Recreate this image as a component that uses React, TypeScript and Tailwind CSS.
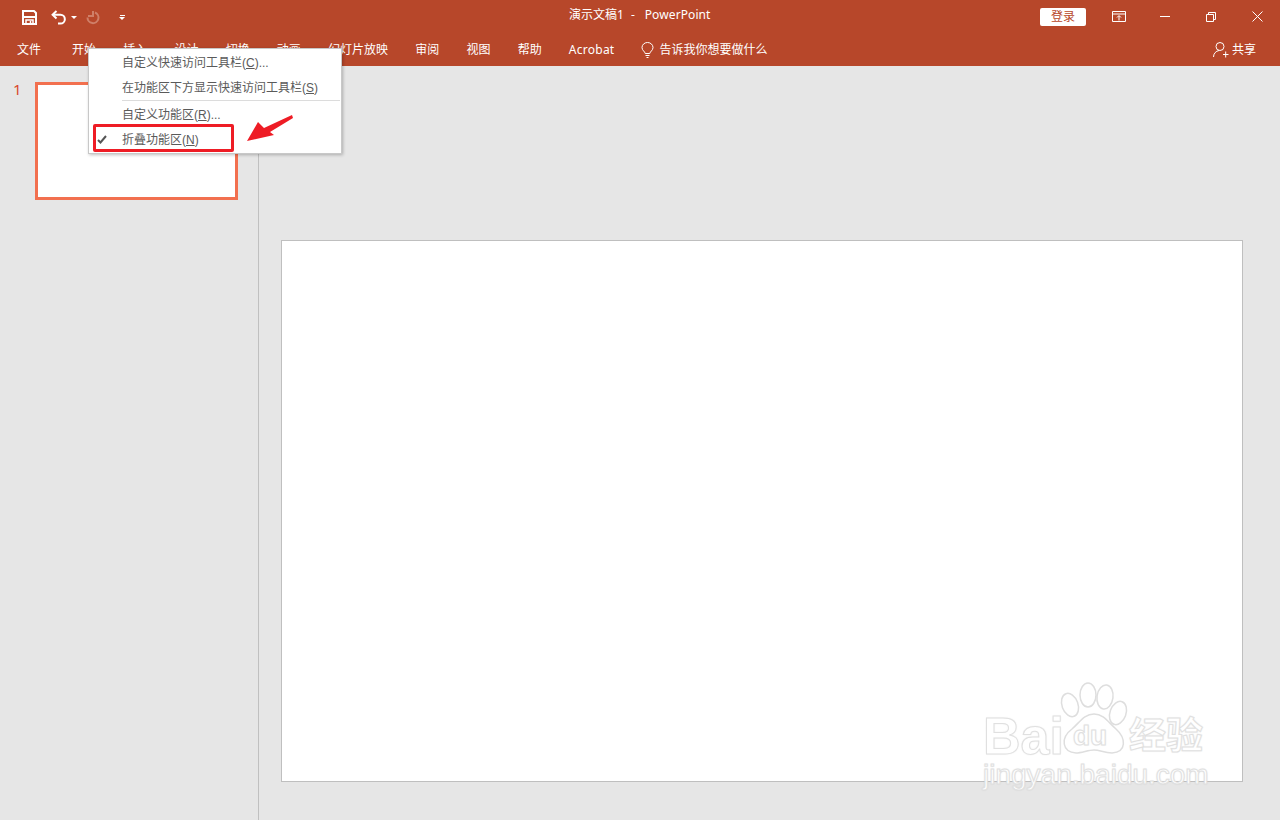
const font = "font-['Liberation_Sans','Noto_Sans_CJK_SC',sans-serif]";
const uiFont = "font-['Noto_Sans','Noto_Sans_CJK_SC',sans-serif]";

const tabs = ["开始", "插入", "设计", "切换", "动画", "幻灯片放映", "审阅", "视图", "帮助"];

function QuickAccess() {
  return (
    <div className="flex items-center pl-[22px] pt-[1px] text-white">
      <svg width="15" height="15" viewBox="0 0 15 15" fill="none" stroke="currentColor" strokeWidth="2">
        <path d="M1 1h11l2 2v11H1z" />
        <path d="M1 7h13" />
        <path d="M4 14v-4h7v4" strokeWidth="1.500" />
        <path d="M8.500 11v3" strokeWidth="1.500" />
      </svg>
      <svg className="ml-[14px]" width="15" height="15" viewBox="0 0 15 15" fill="none" stroke="currentColor" strokeWidth="2">
        <path d="M5.500 1 1.600 4.800l3.900 3.700" />
        <path d="M2 4.800h7.500a4.200 4.200 0 0 1 0 8.700H7" />
      </svg>
      <span className="ml-[5px] mt-[1px] border-x-[3px] border-t-[3px] border-x-transparent border-t-white" />
      <svg className="ml-[9px]" width="15" height="15" viewBox="0 0 15 15" fill="none" stroke="#cf7f68" strokeWidth="2">
        <path d="M7 1v5H2" />
        <path d="M9 2.500a5.500 5.500 0 1 1-7.500 5" />
      </svg>
      <span className="ml-[18px] flex flex-col items-center gap-[1px]">
        <span className="h-px w-[5px] bg-white" />
        <span className="border-x-[3px] border-t-[3px] border-x-transparent border-t-white" />
      </span>
    </div>
  );
}

function WindowButtons() {
  return (
    <div className="flex items-center text-white">
      <span className="flex h-[18px] w-[46px] items-center justify-center rounded-[2px] bg-white text-[12px] text-[#b7472a]">登录</span>
      <svg className="ml-[26px]" width="14" height="11" viewBox="0 0 14 11" fill="none" stroke="currentColor">
        <path d="M.5.5h13v10H.5z" />
        <path d="M.5 3h13" />
        <path d="M7 9.500V5M5 6.500l2-2 2 2" />
      </svg>
      <span className="ml-[34px] h-px w-[10px] bg-white" />
      <svg className="ml-[36px]" width="10" height="10" viewBox="0 0 10 10" fill="none" stroke="currentColor">
        <path d="M.5 2.500h7v7h-7z" />
        <path d="M2.500 2.500v-2h7v7h-2" />
      </svg>
      <svg className="ml-[36px] mr-[17px]" width="11" height="11" viewBox="0 0 11 11" fill="none" stroke="currentColor">
        <path d="M.5.5l10 10M10.500.5l-10 10" />
      </svg>
    </div>
  );
}

function TabRow() {
  return (
    <div className={`flex h-[33px] items-center pl-[17px] text-[12px] text-white ${uiFont}`}>
      <span className="mr-[31px]">文件</span>
      <div className="flex gap-[27.200px]">
        {tabs.map((t) => (
          <span key={t}>{t}</span>
        ))}
        <span className="tracking-[0.25px]">Acrobat</span>
      </div>
      <svg className="ml-[27px]" width="13" height="16" viewBox="0 0 13 16" fill="none" stroke="currentColor">
        <path d="M4.200 11.500C4 9.500 1 8.500 1 5.500a5.500 5 0 0 1 11 0c0 3-3 4-3.200 6z" />
        <path d="M4.500 13.500h4M5.500 15.500h2" />
      </svg>
      <span className="ml-[5px]">告诉我你想要做什么</span>
      <div className="ml-auto flex items-center pr-[24px]">
        <svg width="16" height="17" viewBox="0 0 16 17" fill="none" stroke="currentColor">
          <circle cx="7" cy="5.500" r="4" />
          <path d="M.5 16c0-3.500 2.500-6 5.500-6.500M10 13.500h5.500M12.700 10.500v6" />
        </svg>
        <span className="ml-[3px]">共享</span>
      </div>
    </div>
  );
}

function ContextMenu() {
  return (
    <div className="absolute left-[88px] top-[48px] h-[106px] w-[254px] border border-[#c8c8c8] bg-white text-[12px] text-[#5a5a5a] shadow-[1px_1px_3px_rgba(0,0,0,0.25)]">
      <div className="flex h-[26px] items-center pl-[33px] pt-[1px]">
        自定义快速访问工具栏(<span className="underline">C</span>)...
      </div>
      <div className="flex h-[25px] items-center pl-[33px]">
        在功能区下方显示快速访问工具栏(<span className="underline">S</span>)
      </div>
      <div className="ml-[33px] mr-[1px] h-px bg-[#dcdcdc]" />
      <div className="flex h-[27px] items-center pl-[33px]">
        自定义功能区(<span className="underline">R</span>)...
      </div>
      <div className="relative flex h-[24px] items-center pl-[33px]">
        <svg className="absolute left-[8px] top-[7px]" width="10" height="9" viewBox="0 0 10 9" fill="none" stroke="#555" strokeWidth="2">
          <path d="M1 5l2.500 2.500L9 1" />
        </svg>
        折叠功能区(<span className="underline">N</span>)
      </div>
      <div className="absolute left-[4px] top-[75px] h-[28px] w-[141px] rounded-[2px] border-[3px] border-[#ee1c25]" />
      <svg className="absolute left-[158px] top-[65px]" width="46" height="28" viewBox="0 0 46 28">
        <path d="M0 27 11 8l6 6L45 1l1 3-23 14 4 3z" fill="#ee1c25" />
      </svg>
    </div>
  );
}

function Watermark() {
  const outline = "text-white [-webkit-text-stroke:1px_#e0e0e0] [text-shadow:0_0_2px_rgba(0,0,0,0.12)]";
  return (
    <div className="absolute left-[982px] top-[682px] h-[110px] w-[232px] select-none">
      <svg className="absolute left-[72px] top-0" width="80" height="75" viewBox="0 0 80 75" fill="#fff" stroke="#dedede" strokeWidth="1.500">
        <ellipse cx="16" cy="23" rx="8" ry="12" transform="rotate(-20 16 23)" />
        <ellipse cx="34" cy="13" rx="8" ry="12" />
        <ellipse cx="51" cy="15" rx="8" ry="12" transform="rotate(8 51 15)" />
        <ellipse cx="64" cy="31" rx="8" ry="12" transform="rotate(20 64 31)" />
        <path d="M40 32C50 32 54 40 62 47C72 56 73 70 58 71C50 71 46 68 40 68C34 68 28 71 22 71C8 70 6 56 18 47C26 40 30 32 40 32z" />
      </svg>
      <span className={`absolute left-[1px] top-[34px] font-['Liberation_Sans'] text-[52px] font-bold leading-[40px] ${outline}`}>Bai</span>
      <span className={`absolute left-[91px] top-[41px] font-['Liberation_Sans'] text-[28px] font-bold leading-[26px] ${outline}`}>du</span>
      <span className={`absolute left-[147px] top-[35px] text-[37px] font-bold leading-[40px] ${outline}`}>经验</span>
      <span className={`absolute left-[1px] top-[78px] font-['Liberation_Sans'] text-[28px] leading-[30px] ${outline}`}>jingyan.baidu.com</span>
    </div>
  );
}

export default function App() {
  return (
    <div className={`relative flex h-[820px] w-[1280px] flex-col overflow-hidden bg-[#e6e6e6] ${font}`}>
      <header className="h-[66px] shrink-0 bg-[#b7472a]">
        <div className="relative flex h-[33px] justify-between">
          <QuickAccess />
          <div className={`absolute left-[569px] top-[6px] flex text-[12px] leading-[18px] text-white ${uiFont}`}>
            <span>演示文稿1</span>
            <span className="ml-[7px]">-</span>
            <span className="ml-[10px] tracking-[0.1px]">PowerPoint</span>
          </div>
          <WindowButtons />
        </div>
        <TabRow />
      </header>
      <div className="flex min-h-0 flex-1">
        <aside className="w-[259px] shrink-0 border-r border-[#c0c0c0] pl-[13px] pt-[14px]">
          <div className="flex items-start">
            <span className={`w-[9px] text-[15px] leading-[18px] text-[#d9492c] ${uiFont}`}>1</span>
            <div className="ml-[13px] mt-[2px] h-[118px] w-[203px] border-[3px] border-[#f2704f] bg-white" />
          </div>
        </aside>
        <main className="flex-1 pl-[22px] pt-[174px]">
          <div className="h-[542px] w-[962px] border border-[#bfbfbf] bg-white" />
        </main>
      </div>
      <ContextMenu />
      <Watermark />
    </div>
  );
}
